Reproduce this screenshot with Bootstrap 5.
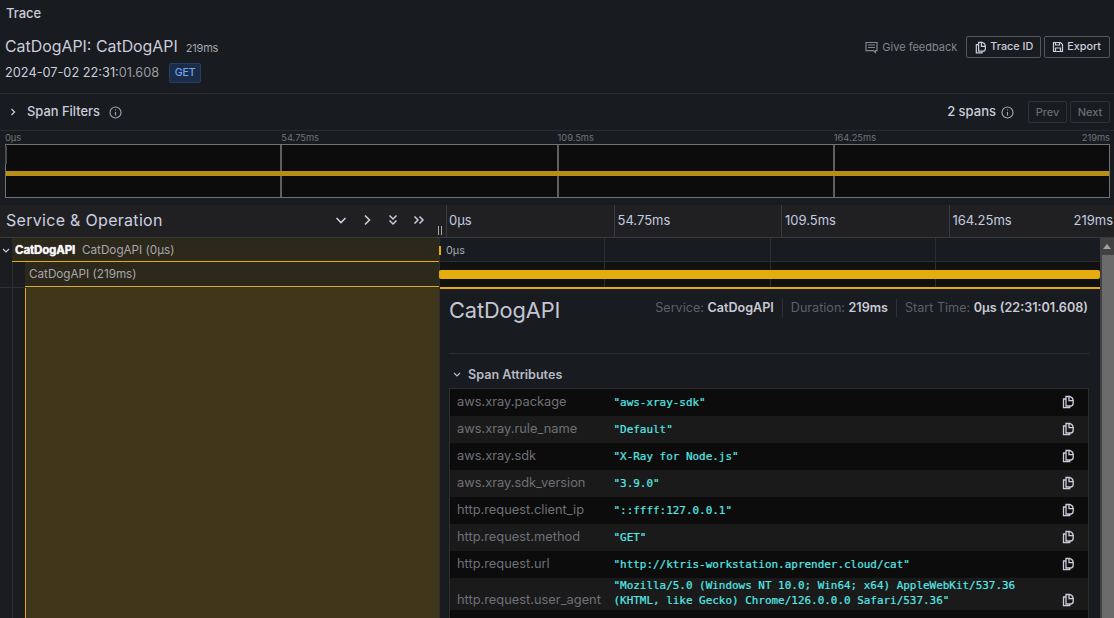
<!DOCTYPE html>
<html lang="en">
<head>
<meta charset="UTF-8">
<meta name="viewport" content="width=device-width, initial-scale=1.0">
<title>Trace</title>
<link href="https://cdn.jsdelivr.net/npm/bootstrap@5.3.0/dist/css/bootstrap.min.css" rel="stylesheet">
<style>
html, body { height: 100%; }
body { background: #181b1f; color: #ccccdc; font-family: Inter, "Noto Sans", sans-serif; font-size: 12px; overflow: hidden; }
svg { display: block; flex: none; }
.page-title { height: 25px; padding: 5px 6px 0; font-size: 13px; font-weight: 500; line-height: 16px; }
.head-block { height: 69px; padding: 0 4px 0 5px; border-bottom: 1px solid #2a2c30; }
.trace-name { font-size: 15.9px; line-height: 20px; font-weight: 400; margin: 12px 0 0 0; }
.trace-dur { font-size: 11px; color: #a5a6ad; margin-left: 8px; letter-spacing: -.2px; }
.trace-time { font-size: 12.75px; line-height: 18px; margin-top: 5px; }
.trace-time span { color: #9a9ba3; }
.method-tag { font-size: 10.5px; line-height: 18px; height: 20px; width: 32px; text-align: center; margin-left: 10px; color: #6ea6f0; background: #1a2c47; border: 1px solid #27405f; border-radius: 2px; font-weight: 500; }
.head-tools { margin-top: 11px; }
.feedback { color: #85868d; font-size: 11px; margin-right: 6px; }
.feedback-icon { margin-right: 4px; }
.tool-btn { height: 22px; padding: 0 7px; font-size: 10.8px; font-weight: 500; color: #ccccdc; border: 1px solid #55575d; border-radius: 2px; background: transparent; line-height: 20px; }
.tool-btn:last-child { padding-right: 8px; }
.tool-icon { margin-right: 3px; }
.filter-bar { height: 37px; padding: 0 4px 0 10px; border-bottom: 1px solid #2a2c30; }
.filter-label { font-size: 12.9px; font-weight: 500; margin-left: 11px; margin-right: 9px; }
.span-count { font-size: 13px; font-weight: 500; margin-right: 5px; }
.info-end { margin-right: 14px; }
.pager { gap: 3px; }
.page-btn { height: 22px; width: 40px; padding: 0; font-size: 11px; font-weight: 500; color: #6a6c72; border: 1px solid #303237; border-radius: 2px; background: transparent; line-height: 20px; }
.page-btn:first-child { width: 39px; }
.mini-labels { height: 13px; margin: 0 4px 0 5px; font-size: 9.3px; line-height: 13px; color: #72737a; }
.mini-labels > div { flex: 1 1 0; }
.mini-labels > div:last-child { flex: 0 0 0; min-width: 0; width: 0; display: flex; justify-content: flex-end; white-space: nowrap; }
.mini-map { height: 54px; margin: 0 4px 0 5px; background: #0c0c0d; border: 1px solid #717171; position: relative; }
.mini-map > div { flex: 1 1 0; border-right: 2px solid #5f5f5f; }
.mini-map > div:nth-child(4) { border-right: 0; }
.mini-map > .mini-bar { position: absolute; left: 0; right: 0; top: 26px; height: 5px; background: #b78f14; border: 0; }
.mini-map > .mini-start { position: absolute; left: -1px; top: 1px; width: 2px; height: 18px; background: #4c4c4f; border: 0; }
.timeline-head { height: 33px; margin-top: 7px; background: #202022; border-bottom: 1px solid #3a3b3d; }
.svc-head { width: 447px; padding: 0 6px 2px; position: relative; flex: none; border-right: 1px solid #3a3b3d; }
.svc-title { font-size: 16px; letter-spacing: .3px; color: #ccd0e0; }
.svc-icons { position: absolute; left: 333px; top: 0; bottom: 2px; gap: 10px; }
.drag-mark { position: absolute; right: 4px; bottom: 2px; width: 4px; height: 9px; border-left: 1px solid #aaa; border-right: 1px solid #aaa; }
.tick-row { flex: 1; font-size: 13px; color: #c3cbe0; }
.tick-row > div { flex: 0 0 167.5px; padding-left: 3px; border-right: 1px solid #3a3b3d; line-height: 30px; }
.tick-row > div:first-child { padding-left: 2px; }
.tick-row > div:nth-child(4) { flex: 1 1 0; border-right: 0; }
.tick-row > div:last-child { flex: 0 0 0; min-width: 0; width: 0; display: flex; justify-content: flex-end; white-space: nowrap; padding: 0 1px 0 0; border: 0; }
.trace-body { flex: 1; min-height: 0; overflow: hidden; }
.span-side { width: 439px; flex: none; position: relative; background: #1b1c1f; }
.svc-row { height: 24px; background: #2c281a; border-bottom: 1px solid #e5ac0e; margin-left: 12px; padding: 2px 0 0 3px; }
.root-toggle { position: absolute; left: 2px; top: 10px; }
.svc-name { font-weight: 700; font-size: 11.6px; color: #f6f6f8; text-shadow: 0 0 1px #fff; margin-right: 7px; letter-spacing: -.2px; }
.op-name { font-size: 11.7px; color: #a6a7ae; }
.child-row { height: 26px; border-bottom: 1px solid #2f3032; position: relative; }
.child-fill { height: 25px; margin-left: 25px; padding: 2px 0 0 4px; background: #2c281a; border-bottom: 1px solid #e5ac0e; }
.olive-fill { height: 400px; margin-left: 25px; background: #40371b; border-left: 1px solid #e5ac0e; }
.guide-v { position: absolute; left: 12px; top: 24px; height: 400px; width: 1px; background: #2c2e30; }
.detail-side { flex: 1; min-width: 0; background: #181b1f; border-left: 1px solid #2c2e30; }
.bar-row-a { height: 24px; position: relative; border-bottom: 1px solid #2c2e30; }
.row-grid { position: absolute; inset: 0; }
.row-grid > div { flex: 1 1 0; border-right: 1px solid #2c2e30; }
.row-grid > div:last-child { border-right: 0; }
.tick-mark { width: 2px; height: 9px; background: #e5ac0e; position: absolute; left: -1px; top: 8px; }
.zero-label { position: absolute; left: 6px; top: 5px; font-size: 10.8px; line-height: 16px; color: #a5a6ad; }
.bar-row-b { height: 25px; position: relative; background: #111112; }
.span-bar { position: absolute; left: -1px; right: 0; top: 8px; height: 9px; background: #e5ac0e; border-radius: 2px; }
.detail-panel { border-top: 2px solid #e5ac0e; padding: 0 11px 0 9px; }
.detail-head { height: 65px; border-bottom: 1px solid #2c2e30; }
.detail-name { font-size: 21.8px; font-weight: 400; margin: 8px 0 0; line-height: 27px; color: #c4c6d4; letter-spacing: -.1px; }
.meta-strip { font-size: 12.6px; margin-top: 10px; color: #5f6067; line-height: 18px; }
.meta-strip b { font-weight: 600; color: #c8c9d4; }
.meta-strip > span { padding: 0 8px; border-right: 1px solid #2f3135; }
.meta-strip > span:last-child { border-right: 0; padding-right: 1px; }
.attr-toggle { height: 34px; padding: 8px 0 0 4px; font-size: 12.6px; font-weight: 600; color: #b7b8c4; }
.attr-toggle span { margin-left: 7px; }
.attr-table { margin: 0; background: #0c0c0d; border: 1px solid #2c2e30; border-bottom: 0; width: 100%; --bs-table-bg: transparent; --bs-table-color: inherit; --bs-table-border-color: transparent; table-layout: fixed; }
.attr-table td { padding: 0 7px; height: 27px; vertical-align: middle; border: 0; line-height: 14px; background: transparent; }
.attr-table tr:nth-child(even) { background: #1a1a1b; }
.attr-key { width: 157px; color: #707077; font-size: 12.85px; white-space: nowrap; }
.attr-table .attr-val { color: #56e8e6; font-family: "DejaVu Sans Mono", monospace; font-size: 10.95px; line-height: 15px; -webkit-text-stroke: .2px #56e8e6; }
.attr-table .attr-copy { width: 46px; padding-right: 13px; }
.attr-copy svg { margin-left: auto; }
.attr-table .tall-row td { height: 32px; vertical-align: bottom; padding-bottom: 3px; }
.attr-table .tall-row .attr-val { vertical-align: top; padding: 0 7px 2px; }
.scroll-rail { width: 14px; flex: none; background: #414141; position: relative; }
.scroll-up { height: 17px; }
.scroll-thumb { height: 400px; margin: 0 0 0 2px; background: #6b6b6b; width: 12px; }
</style>
</head>
<body class="d-flex flex-column">
  <div class="page-title">Trace</div>
  <div class="head-block d-flex justify-content-between">
    <div>
      <div class="trace-name d-flex align-items-baseline">CatDogAPI: CatDogAPI <span class="trace-dur">219ms</span></div>
      <div class="trace-time d-flex align-items-center">2024-07-02 22:31:<span>01.608</span><div class="method-tag">GET</div></div>
    </div>
    <div class="head-tools d-flex align-items-start pager">
      <div class="feedback d-flex align-items-center" style="height:22px">
        <svg width="13" height="13" viewBox="0 0 13 13" fill="none" stroke="#85868d" stroke-width="1.2" class="feedback-icon"><path d="M1 1.5h11v8.2h-1.6v1.8l-2-1.8H1z"/><path d="M3 4h7M3 6.5h7"/></svg>
        Give feedback
      </div>
      <button class="tool-btn d-flex align-items-center" type="button">
        <svg width="13" height="13" viewBox="0 0 14 14" fill="none" stroke="#ccccdc" stroke-width="1.3" class="tool-icon"><path d="M5 1.5h3v4.2h4.2v2.6a2.7 2.7 0 0 1-2.7 2.7H5z"/><path d="M8 1.5a4.6 4.6 0 0 1 4.2 4.2"/><path d="M5 4H2.5v8.7h6.2V11"/></svg>
        Trace ID
      </button>
      <button class="tool-btn d-flex align-items-center" type="button">
        <svg width="12" height="12" viewBox="0 0 12 12" fill="none" stroke="#ccccdc" stroke-width="1.2" class="tool-icon"><path d="M1.5 1.5h7l2 2v7h-9z"/><path d="M3.5 1.5v2.5h4V1.5M3.5 10.5V7h5v3.5"/></svg>
        Export
      </button>
    </div>
  </div>
  <div class="filter-bar d-flex align-items-center">
    <svg width="6" height="8" viewBox="0 0 6 8" fill="none" stroke="#ccccdc" stroke-width="1.2"><path d="M1.5 1l3 3-3 3"/></svg>
    <span class="filter-label">Span Filters</span>
    <svg width="13" height="13" viewBox="0 0 13 13" fill="none" stroke="#a7a8b1" stroke-width="1.1"><circle cx="6.5" cy="6.5" r="5.5"/><path d="M6.5 6v3.4M6.5 3.6v1"/></svg>
    <div class="ms-auto d-flex align-items-center">
      <span class="span-count">2 spans</span>
      <svg width="13" height="13" viewBox="0 0 13 13" fill="none" stroke="#a7a8b1" stroke-width="1.1" class="info-end"><circle cx="6.5" cy="6.5" r="5.5"/><path d="M6.5 6v3.4M6.5 3.6v1"/></svg>
      <div class="d-flex pager">
        <button class="page-btn" type="button">Prev</button>
        <button class="page-btn" type="button">Next</button>
      </div>
    </div>
  </div>
  <div class="mini-labels d-flex">
    <div>0µs</div><div>54.75ms</div><div>109.5ms</div><div>164.25ms</div><div>219ms</div>
  </div>
  <div class="mini-map d-flex">
    <div></div><div></div><div></div><div></div>
    <div class="mini-bar"></div>
    <div class="mini-start"></div>
  </div>
  <div class="timeline-head d-flex">
    <div class="svc-head d-flex align-items-center">
      <div class="svc-title">Service &amp; Operation</div>
      <div class="svc-icons d-flex align-items-center">
        <svg width="16" height="16" viewBox="0 0 16 16" fill="none" stroke="#ccccdc" stroke-width="1.6"><path d="M3.5 6l4.5 4.5L12.5 6"/></svg>
        <svg width="16" height="16" viewBox="0 0 16 16" fill="none" stroke="#ccccdc" stroke-width="1.6"><path d="M6 3.5L10.5 8 6 12.5"/></svg>
        <svg width="16" height="16" viewBox="0 0 16 16" fill="none" stroke="#ccccdc" stroke-width="1.5"><path d="M4.5 3.5L8 7l3.5-3.5M4.5 8.5L8 12l3.5-3.5"/></svg>
        <svg width="16" height="16" viewBox="0 0 16 16" fill="none" stroke="#ccccdc" stroke-width="1.5"><path d="M3.5 4.5L7 8l-3.5 3.5M8.5 4.5L12 8l-3.5 3.5"/></svg>
      </div>
      <div class="drag-mark"></div>
    </div>
    <div class="tick-row d-flex">
      <div>0µs</div><div>54.75ms</div><div>109.5ms</div><div>164.25ms</div><div>219ms</div>
    </div>
  </div>
  <div class="trace-body d-flex">
    <div class="span-side">
      <svg class="root-toggle" width="8" height="6" viewBox="0 0 8 6" fill="none" stroke="#ccccdc" stroke-width="1.2"><path d="M1 1l3 3 3-3"/></svg>
      <div class="svc-row d-flex align-items-center"><span class="svc-name">CatDogAPI</span><span class="op-name">CatDogAPI (0µs)</span></div>
      <div class="child-row"><div class="child-fill d-flex align-items-center"><span class="op-name">CatDogAPI (219ms)</span></div></div>
      <div class="olive-fill"></div>
      <div class="guide-v"></div>
    </div>
    <div class="detail-side">
      <div class="bar-row-a">
        <div class="row-grid d-flex"><div></div><div></div><div></div><div></div></div>
        <div class="tick-mark"></div>
        <div class="zero-label">0µs</div>
      </div>
      <div class="bar-row-b">
        <div class="row-grid d-flex"><div></div><div></div><div></div><div></div></div>
        <div class="span-bar"></div>
      </div>
      <div class="detail-panel">
        <div class="detail-head d-flex justify-content-between">
          <h2 class="detail-name">CatDogAPI</h2>
          <div class="meta-strip d-flex align-items-start">
            <span>Service: <b>CatDogAPI</b></span>
            <span>Duration: <b>219ms</b></span>
            <span>Start Time: <b>0µs (22:31:01.608)</b></span>
          </div>
        </div>
        <div class="attr-toggle d-flex align-items-center">
          <svg width="8" height="6" viewBox="0 0 8 6" fill="none" stroke="#b7b8c4" stroke-width="1.2"><path d="M1 1l3 3 3-3"/></svg>
          <span>Span Attributes</span>
        </div>
        <table class="table attr-table" id="attrs"><tbody></tbody></table>
      </div>
    </div>
    <div class="scroll-rail">
      <div class="scroll-up d-flex justify-content-center align-items-center"><svg width="8" height="5" viewBox="0 0 8 5"><path d="M0 5l4-5 4 5z" fill="#a3a3a3"/></svg></div>
      <div class="scroll-thumb"></div>
    </div>
  </div>
  <script src="https://cdn.jsdelivr.net/npm/bootstrap@5.3.0/dist/js/bootstrap.bundle.min.js"></script>
  <script>
    const attrs = [
      ["aws.xray.package", '"aws-xray-sdk"'],
      ["aws.xray.rule_name", '"Default"'],
      ["aws.xray.sdk", '"X-Ray for Node.js"'],
      ["aws.xray.sdk_version", '"3.9.0"'],
      ["http.request.client_ip", '"::ffff:127.0.0.1"'],
      ["http.request.method", '"GET"'],
      ["http.request.url", '"http://ktris-workstation.aprender.cloud/cat"'],
      ["http.request.user_agent", '"Mozilla/5.0 (Windows NT 10.0; Win64; x64) AppleWebKit/537.36 (KHTML, like Gecko) Chrome/126.0.0.0 Safari/537.36"']
    ];
    const copyIcon = '<svg width="14" height="14" viewBox="0 0 14 14" fill="none" stroke="#ccccdc" stroke-width="1.3"><path d="M5 1.5h3v4.2h4.2v2.6a2.7 2.7 0 0 1-2.7 2.7H5z"/><path d="M8 1.5a4.6 4.6 0 0 1 4.2 4.2"/><path d="M5 4H2.5v8.7h6.2V11"/></svg>';
    document.querySelector("#attrs tbody").innerHTML = attrs.map((a, i) => `
      <tr class="${i === 7 ? "tall-row" : ""}">
        <td class="attr-key">${a[0]}</td>
        <td class="attr-val">${a[1]}</td>
        <td class="attr-copy">${copyIcon}</td>
      </tr>`).join("") + '<tr><td></td><td></td><td></td></tr>';
  </script>
</body>
</html>
